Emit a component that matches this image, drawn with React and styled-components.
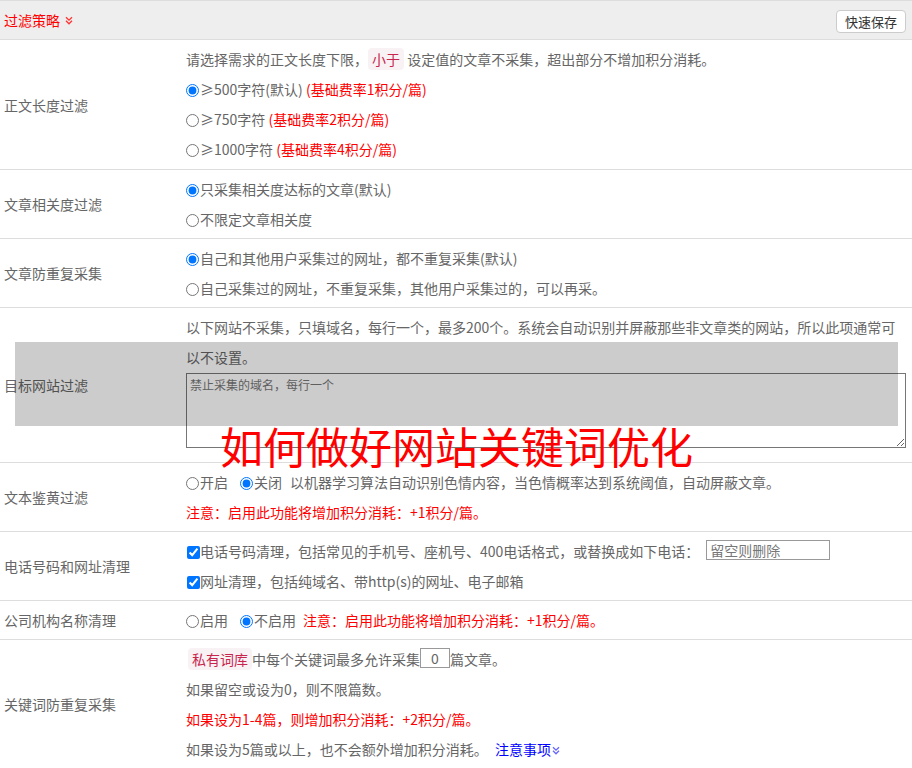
import React from 'react';
import styled, { createGlobalStyle } from 'styled-components';

const GlobalStyle = createGlobalStyle`
  body {
    margin: 0;
    background: #fff;
    font-family: "Noto Sans CJK SC", "Noto Sans", sans-serif;
    font-size: 14px;
    color: #666;
  }
`;

function Chevrons({ color }) {
    return (
        <ChevronSvg viewBox="0 0 8 9" width="8" height="9">
            <path d="M1 1.2 L4 4.2 L7 1.2 M1 4.8 L4 7.8 L7 4.8" fill="none" stroke={color} strokeWidth="1.3" />
        </ChevronSvg>
    );
}

function App() {
    return (
        <>
            <GlobalStyle />
            <Page>
                <Header>
                    <HeaderTitle>
                        过滤策略 <Chevrons color="#f33" />
                    </HeaderTitle>
                    <SaveButton>快速保存</SaveButton>
                </Header>

                <Row>
                    <Label>正文长度过滤</Label>
                    <Cell $bottom={5}>
                        <Line>请选择需求的正文长度下限，<Tag>小于</Tag> 设定值的文章不采集，超出部分不增加积分消耗。</Line>
                        <Line><Radio name="len" defaultChecked />≥500字符(默认) <Red>(基础费率1积分/篇)</Red></Line>
                        <Line><Radio name="len" />≥750字符 <Red>(基础费率2积分/篇)</Red></Line>
                        <Line><Radio name="len" />≥1000字符 <Red>(基础费率4积分/篇)</Red></Line>
                    </Cell>
                </Row>

                <Row>
                    <Label>文章相关度过滤</Label>
                    <Cell>
                        <Line><Radio name="rel" defaultChecked />只采集相关度达标的文章(默认)</Line>
                        <Line><Radio name="rel" />不限定文章相关度</Line>
                    </Cell>
                </Row>

                <Row>
                    <Label>文章防重复采集</Label>
                    <Cell>
                        <Line><Radio name="dup" defaultChecked />自己和其他用户采集过的网址，都不重复采集(默认)</Line>
                        <Line><Radio name="dup" />自己采集过的网址，不重复采集，其他用户采集过的，可以再采。</Line>
                    </Cell>
                </Row>

                <Row>
                    <Label>目标网站过滤</Label>
                    <Cell>
                        <Line>以下网站不采集，只填域名，每行一个，最多200个。系统会自动识别并屏蔽那些非文章类的网站，所以此项通常可以不设置。</Line>
                        <DomainBox placeholder="禁止采集的域名，每行一个" />
                    </Cell>
                </Row>

                <Row>
                    <Label>文本鉴黄过滤</Label>
                    <Cell>
                        <Line>
                            <Choice><Radio name="porn" />开启</Choice>
                            <Choice $gap={8}><Radio name="porn" defaultChecked />关闭</Choice>
                            以机器学习算法自动识别色情内容，当色情概率达到系统阈值，自动屏蔽文章。
                        </Line>
                        <Line><Red>注意：启用此功能将增加积分消耗：+1积分/篇。</Red></Line>
                    </Cell>
                </Row>

                <Row>
                    <Label>电话号码和网址清理</Label>
                    <Cell>
                        <Line>
                            <Check defaultChecked />电话号码清理，包括常见的手机号、座机号、400电话格式，或替换成如下电话：
                            <PhoneInput placeholder="留空则删除" />
                        </Line>
                        <Line><Check defaultChecked />网址清理，包括纯域名、带http(s)的网址、电子邮箱</Line>
                    </Cell>
                </Row>

                <Row>
                    <Label>公司机构名称清理</Label>
                    <Cell>
                        <Line>
                            <Choice><Radio name="org" />启用</Choice>
                            <Choice $gap={7}><Radio name="org" defaultChecked />不启用</Choice>
                            <Red>注意：启用此功能将增加积分消耗：+1积分/篇。</Red>
                        </Line>
                    </Cell>
                </Row>

                <Row>
                    <Label>关键词防重复采集</Label>
                    <Cell>
                        <Line><Tag $left={2}>私有词库</Tag>中每个关键词最多允许采集<CountInput defaultValue="0" />篇文章。</Line>
                        <Line>如果留空或设为0，则不限篇数。</Line>
                        <Line><Red>如果设为1-4篇，则增加积分消耗：+2积分/篇。</Red></Line>
                        <Line>如果设为5篇或以上，也不会额外增加积分消耗。 <MoreLink>注意事项<Chevrons color="#66f" /></MoreLink></Line>
                    </Cell>
                </Row>

                <Shade />
                <Watermark>如何做好网站关键词优化</Watermark>
            </Page>
        </>
    );
}

export default App;

const Page = styled.div`
  position: relative;
  width: 912px;
  border-top: 1px solid #ddd;
`;

const Header = styled.div`
  display: flex;
  justify-content: space-between;
  align-items: center;
  height: 38px;
  padding: 0 6px 0 4px;
  background: #eee;
  border-bottom: 1px solid #ddd;
`;

const HeaderTitle = styled.div`
  color: #f00;
  font-size: 14px;
  display: flex;
  align-items: center;
  gap: 5px;
`;

const ChevronSvg = styled.svg`
  display: inline-block;
  vertical-align: middle;
`;

const SaveButton = styled.button`
  font-family: inherit;
  font-size: 13px;
  color: #333;
  background: #fff;
  border: 1px solid #ccc;
  border-radius: 4px;
  height: 23px;
  padding: 0 8px;
  line-height: 20px;
  margin-top: 3px;
`;

const Row = styled.div`
  display: grid;
  grid-template-columns: 182px 1fr;
  border-bottom: 1px solid #ddd;
`;

const Label = styled.div`
  display: flex;
  align-items: center;
  padding: 4px;
  color: #666;
`;

const Cell = styled.div`
  padding: 4px 4px ${p => p.$bottom || 4}px;
  color: #666;
`;

const Line = styled.div`
  line-height: 30px;
  white-space: normal;
`;

const Red = styled.span`
  color: #f00;
`;

const Tag = styled.span`
  display: inline-block;
  background: #f9f2f4;
  color: #c7254e;
  border-radius: 4px;
  padding: 0 4px;
  line-height: 22px;
  margin-left: ${p => p.$left || 0}px;
`;

const Radio = styled.input.attrs({ type: 'radio' })`
  width: 13px;
  height: 13px;
  margin: 0 1px 0 0;
  vertical-align: -2px;
`;

const Check = styled.input.attrs({ type: 'checkbox' })`
  width: 13px;
  height: 13px;
  margin: 0 0 0 1px;
  vertical-align: -2px;
`;

const Choice = styled.label`
  margin-right: ${p => p.$gap || 12}px;
`;

const DomainBox = styled.textarea`
  display: block;
  box-sizing: border-box;
  width: 720px;
  height: 75px;
  margin: 1px 0 10px;
  padding: 2px 3px;
  font-family: inherit;
  font-size: 12px;
  border: 1px solid #767676;
  &::placeholder {
    color: #777;
  }
`;

const PhoneInput = styled.input.attrs({ type: 'text' })`
  box-sizing: border-box;
  width: 124px;
  height: 20px;
  margin-left: 7px;
  padding: 0 3px;
  font-family: inherit;
  font-size: 14px;
  border: 1px solid #999;
  vertical-align: 1px;
  &::placeholder {
    color: #777;
  }
`;

const CountInput = styled.input.attrs({ type: 'text' })`
  box-sizing: border-box;
  width: 30px;
  height: 20px;
  padding: 0;
  font-family: inherit;
  font-size: 14px;
  color: #666;
  text-align: center;
  border: 1px solid #999;
  vertical-align: 1px;
`;

const MoreLink = styled.a`
  color: #00f;
  margin-left: 4px;
  cursor: pointer;
  svg {
    margin-left: 1px;
    vertical-align: 0;
  }
`;

const Shade = styled.div`
  position: absolute;
  left: 15px;
  top: 341px;
  width: 883px;
  height: 84px;
  background: rgba(0, 0, 0, 0.2);
  pointer-events: none;
`;

const Watermark = styled.div`
  position: absolute;
  left: 220px;
  top: 424px;
  font-size: 43px;
  line-height: 40px;
  color: #f00;
  white-space: nowrap;
  pointer-events: none;
`;
